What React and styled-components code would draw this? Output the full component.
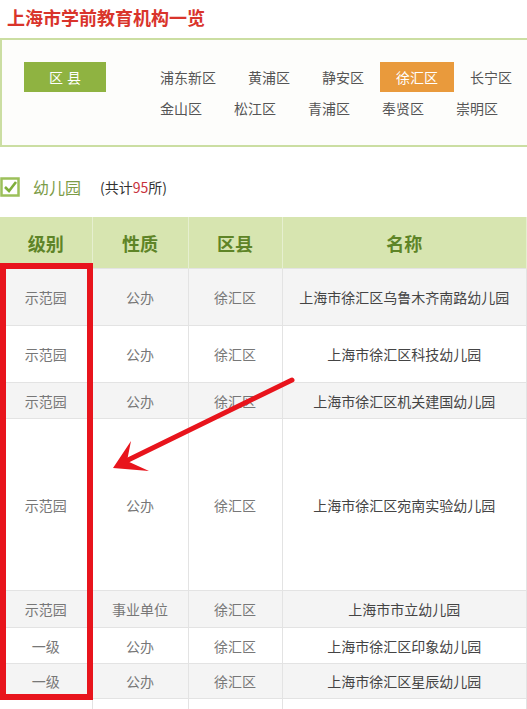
import React from 'react'
import styled, { createGlobalStyle } from 'styled-components'

const GlobalStyle = createGlobalStyle`
  html, body {
    margin: 0;
    padding: 0;
    background: #fff;
    overflow-x: hidden;
  }
  body {
    font-family: "Noto Sans CJK SC", "Noto Sans", sans-serif;
    color: #555;
  }
`

const Page = styled.div`
  position: relative;
  width: 527px;
  height: 709px;
  overflow: hidden;
`

const Title = styled.h1`
  margin: 0;
  padding: 6px 7px 10px;
  font-size: 18px;
  line-height: 22px;
  font-weight: 700;
  color: #d9342b;
`

const FilterBox = styled.div`
  display: flex;
  align-items: flex-start;
  gap: 38px;
  padding: 22px 0 22px 22px;
  border: 2px solid #cbdea2;
  border-right: none;
  background: #fdfdfb;
  white-space: nowrap;
`

const DistrictLabel = styled.div`
  flex: none;
  width: 82px;
  height: 30px;
  line-height: 30px;
  text-align: center;
  background: #8fb341;
  color: #fff;
  font-size: 14px;
  letter-spacing: 4px;
  text-indent: 4px;
`

const DistrictList = styled.div`
  display: flex;
  flex-direction: column;
  gap: 1px;
`

const DistrictRow = styled.div`
  display: flex;
`

const District = styled.span`
  padding: 0 16px;
  height: 30px;
  line-height: 30px;
  font-size: 14px;
  color: ${({ $active }) => ($active ? '#fff' : '#555')};
  background: ${({ $active }) => ($active ? '#e99a3c' : 'transparent')};
`

const CheckRow = styled.div`
  display: flex;
  align-items: center;
  height: 22px;
  margin: 29px 0 19px;
`

const CheckLabel = styled.span`
  margin-left: 13px;
  font-size: 16px;
  color: #7c9c47;
`

const Count = styled.span`
  margin-left: 19px;
  font-size: 14px;
  color: #333;

  b {
    font-weight: 400;
    color: #c9323c;
  }
`

const Table = styled.table`
  width: 100%;
  border-collapse: collapse;
  table-layout: fixed;
`

const HeadCell = styled.th`
  height: 51px;
  padding: 0;
  background: #d7e5b0;
  color: #5e8427;
  font-size: 18px;
  font-weight: 700;
  border-right: 1px solid #e6efcf;
`

const Row = styled.tr`
  height: ${({ $h }) => $h}px;
  background: ${({ $odd }) => ($odd ? '#f4f4f4' : '#fff')};
`

const Cell = styled.td`
  padding: 0;
  text-align: center;
  font-size: 14px;
  color: ${({ $strong }) => ($strong ? '#444' : '#777')};
  border: 1px solid #e3e3e3;
  border-left: none;
`

const Highlight = styled.div`
  position: absolute;
  left: 0;
  top: 263px;
  width: 93px;
  height: 437px;
  box-sizing: border-box;
  border: 6px solid #e8141c;
  pointer-events: none;
`

const Arrow = styled.svg`
  position: absolute;
  left: 0;
  top: 0;
  pointer-events: none;
`

const row1 = ['浦东新区', '黄浦区', '静安区', '徐汇区', '长宁区']
const row2 = ['金山区', '松江区', '青浦区', '奉贤区', '崇明区']

const rows = [
  { level: '示范园', type: '公办', district: '徐汇区', name: '上海市徐汇区乌鲁木齐南路幼儿园', h: 57 },
  { level: '示范园', type: '公办', district: '徐汇区', name: '上海市徐汇区科技幼儿园', h: 57 },
  { level: '示范园', type: '公办', district: '徐汇区', name: '上海市徐汇区机关建国幼儿园', h: 36 },
  { level: '示范园', type: '公办', district: '徐汇区', name: '上海市徐汇区宛南实验幼儿园', h: 172 },
  { level: '示范园', type: '事业单位', district: '徐汇区', name: '上海市市立幼儿园', h: 37 },
  { level: '一级', type: '公办', district: '徐汇区', name: '上海市徐汇区印象幼儿园', h: 36 },
  { level: '一级', type: '公办', district: '徐汇区', name: '上海市徐汇区星辰幼儿园', h: 35 },
  // next row only peeks in at the bottom edge
  { level: '', type: '', district: '', name: '', h: 36 },
]

const CheckIcon = () => (
  <svg width='20' height='20' viewBox='0 0 20 20'>
    <rect x='1.5' y='1.5' width='17' height='17' fill='#fff' stroke='#9cc05a' strokeWidth='2.5' />
    <path d='M5 10 L9 14 L16 5' fill='none' stroke='#7fae3a' strokeWidth='2.6' />
  </svg>
)

export default function App() {
  return (
    <Page>
      <GlobalStyle />
      <Title>上海市学前教育机构一览</Title>
      <FilterBox>
        <DistrictLabel>区县</DistrictLabel>
        <DistrictList>
          <DistrictRow>
            {row1.map((d) => (
              <District key={d} $active={d === '徐汇区'}>{d}</District>
            ))}
          </DistrictRow>
          <DistrictRow>
            {row2.map((d) => (
              <District key={d}>{d}</District>
            ))}
          </DistrictRow>
        </DistrictList>
      </FilterBox>

      <CheckRow>
        <CheckIcon />
        <CheckLabel>幼儿园</CheckLabel>
        <Count>(共计<b>95</b>所)</Count>
      </CheckRow>

      <Table>
        <colgroup>
          <col style={{ width: 92 }} />
          <col style={{ width: 96 }} />
          <col style={{ width: 94 }} />
          <col />
        </colgroup>
        <thead>
          <tr>
            <HeadCell>级别</HeadCell>
            <HeadCell>性质</HeadCell>
            <HeadCell>区县</HeadCell>
            <HeadCell>名称</HeadCell>
          </tr>
        </thead>
        <tbody>
          {rows.map((r, i) => (
            <Row key={i} $h={r.h} $odd={i % 2 === 0}>
              <Cell>{r.level}</Cell>
              <Cell>{r.type}</Cell>
              <Cell>{r.district}</Cell>
              <Cell $strong>{r.name}</Cell>
            </Row>
          ))}
        </tbody>
      </Table>

      <Highlight />
      <Arrow width='527' height='709' viewBox='0 0 527 709'>
        <line x1='292' y1='380' x2='124' y2='462' stroke='#e8141c' strokeWidth='5' strokeLinecap='round' />
        <polygon points='113,468 131,441 127,461 149,471' fill='#e8141c' />
      </Arrow>
    </Page>
  )
}
